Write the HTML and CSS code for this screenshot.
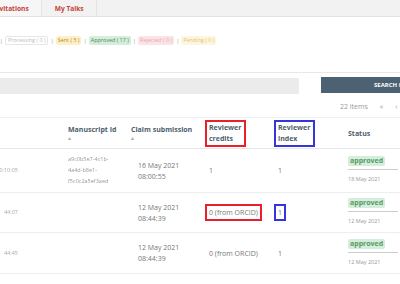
FILE: index.html
```html
<!DOCTYPE html>
<html lang="en">
  <head>
    <meta charset="UTF-8" />
    <meta name="viewport" content="width=device-width, initial-scale=1.0" />
    <title>My Reviews</title>
    <link rel="stylesheet" href="styles.css">
  </head>
  <body>
    <div class="page">
      <!-- Вкладки -->
      <nav class="tabs">
        <a class="tab first" href="#">Invitations</a>
        <a class="tab" href="#">My Talks</a>
        <span class="tab-rest"></span>
      </nav>

      <!-- Фильтры -->
      <div class="filters">
        <span class="pill all">All ( 22 )</span>
        <span class="sep">|</span>
        <span class="pill processing">Processing ( 0 )</span>
        <span class="sep">|</span>
        <span class="pill sent">Sent ( 5 )</span>
        <span class="sep">|</span>
        <span class="pill approved">Approved ( 17 )</span>
        <span class="sep">|</span>
        <span class="pill rejected">Rejected ( 0 )</span>
        <span class="sep">|</span>
        <span class="pill pending">Pending ( 0 )</span>
      </div>

      <div class="search-row">
        <input class="search-input" type="text" />
        <button class="search-btn">SEARCH IN</button>
      </div>

      <div class="pager">
        <span class="count">22 items</span>
        <span class="nav">«</span>
        <span class="nav">‹</span>
      </div>

      <table class="claims">
        <colgroup>
          <col class="c-type" />
          <col class="c-id" />
          <col class="c-date" />
          <col class="c-credits" />
          <col class="c-index" />
          <col class="c-status" />
        </colgroup>
        <thead>
          <tr>
            <th>Type <span class="sort">▴</span></th>
            <th>Manuscript Id<span class="sort-below">▴</span></th>
            <th>Claim submission<span class="sort-below">▴</span></th>
            <th><span class="mark red">Reviewer<br />credits</span></th>
            <th><span class="mark blue">Reviewer<br />index</span></th>
            <th>Status</th>
          </tr>
        </thead>
        <tbody>
          <tr class="r1">
            <td><span class="hidden-text">10:10:05</span></td>
            <td><span class="hidden-text id">a9c0b5e7-4c1b- 4a4d-b8e1- f5c0c2a5ef3aed</span></td>
            <td class="date">16 May 2021<br />08:00:55</td>
            <td class="num">1</td>
            <td class="num">1</td>
            <td>
              <div class="status">
                <span class="badge">approved</span>
                <span class="status-date">18 May 2021</span>
              </div>
            </td>
          </tr>
          <tr class="r2">
            <td><span class="hidden-text">44:07</span></td>
            <td></td>
            <td class="date">12 May 2021<br />08:44:39</td>
            <td><span class="mark red">0 (from ORCID)</span></td>
            <td><span class="mark blue">1</span></td>
            <td>
              <div class="status">
                <span class="badge">approved</span>
                <span class="status-date">12 May 2021</span>
              </div>
            </td>
          </tr>
          <tr class="r3">
            <td><span class="hidden-text">44:45</span></td>
            <td></td>
            <td class="date">12 May 2021<br />08:44:39</td>
            <td class="num">0 (from ORCID)</td>
            <td class="num">1</td>
            <td>
              <div class="status">
                <span class="badge">approved</span>
                <span class="status-date">12 May 2021</span>
              </div>
            </td>
          </tr>
        </tbody>
      </table>
    </div>
  </body>
</html>
```
FILE: styles.css
```css
/* Общие стили */
body {
  margin: 0;
  font-family: "Open Sans", "DejaVu Sans", sans-serif;
  background-color: #fff;
  color: #777;
  width: 400px;
  height: 284px;
  overflow: hidden;
}

.page {
  width: 480px;
}

/* Вкладки */
.tabs {
  display: flex;
  height: 16px;
  background-color: #f2f2f2;
  border-bottom: 1px solid #e2e2e2;
  margin-left: -20px;
}

.tab {
  display: flex;
  align-items: center;
  padding: 0 12px 0 13px;
  font-size: 6.6px;
  font-weight: bold;
  color: #c4423a;
  text-decoration: none;
  border-right: 1px solid #e4e4e4;
}

.tab.first {
  background-color: #f6f6f6;
}

/* Фильтры */
.filters {
  display: flex;
  align-items: center;
  gap: 2px;
  margin-top: 18px;
  margin-left: -26px;
  height: 11px;
  font-size: 5.4px;
}

.sep {
  color: #999;
  font-size: 6px;
}

.pill {
  padding: 1px 2px;
  border-radius: 2px;
  line-height: 7px;
}

.all {
  color: #aaa;
}

.processing {
  color: #bbb;
  border: 1px solid #e6e6e6;
  padding: 0 2px;
}

.sent {
  background-color: #fdefc6;
  color: #b98a2a;
}

.approved {
  background-color: #d5eddb;
  color: #4f8a5b;
}

.rejected {
  background-color: #fbe4e6;
  color: #e9a6ad;
}

.pending {
  background-color: #fdf5de;
  color: #e6c27a;
}

/* Поиск */
.search-row {
  display: flex;
  align-items: flex-start;
  gap: 22px;
  margin-top: 26px;
  padding-top: 4px;
  border-top: 1px solid #e8e8e8;
  width: 440px;
}

.search-input {
  width: 299px;
  height: 16px;
  margin: 1px 0 0;
  padding: 0;
  border: none;
  background-color: #ebebeb;
  box-sizing: border-box;
}

.search-btn {
  width: 119px;
  height: 16px;
  border: none;
  padding: 0 0 0 53px;
  text-align: left;
  background-color: #4c6272;
  color: #fff;
  font-family: "Open Sans", sans-serif;
  font-size: 6px;
  font-weight: bold;
}

/* Пагинация */
.pager {
  display: flex;
  align-items: center;
  gap: 12px;
  padding-left: 340px;
  margin-top: 6px;
  height: 12px;
  font-size: 7px;
  color: #999;
}

/* Таблица */
.claims {
  table-layout: fixed;
  border-collapse: collapse;
  margin-left: -40px;
  margin-top: 5px;
  width: 473px;
  font-size: 7px;
}

.c-type { width: 103px; }
.c-id { width: 63px; }
.c-date { width: 74px; }
.c-credits { width: 69px; }
.c-index { width: 74px; }
.c-status { width: 90px; }

.claims th {
  height: 30px;
  padding: 0 5px;
  text-align: left;
  vertical-align: middle;
  font-weight: bold;
  color: #4d5e6c;
  line-height: 11px;
  border-top: 1px solid #f0f0f0;
  border-bottom: 1px solid #e6e6e6;
}

.sort {
  color: #aaa;
  font-size: 6px;
  margin-left: 3px;
}

.sort-below {
  display: block;
  color: #aaa;
  font-size: 6px;
  line-height: 7px;
}

.claims td {
  padding: 0 5px;
  vertical-align: middle;
  color: #777;
  line-height: 11px;
  border-bottom: 1px solid #eee;
}

.r1 td { height: 43px; }
.r2 td { height: 39px; }
.r3 td { height: 40px; }

.claims td.date {
  padding-left: 12px;
}

.claims td.num {
  padding-left: 9px;
}

/* Разметка красной и синей рамкой */
.mark {
  display: inline-block;
  padding: 1px 2px;
  border: 2px solid;
}

.mark.red {
  border-color: #e8202a;
}

.mark.blue {
  border-color: #3535d8;
}

th .mark {
  padding: 0 3px 1px 2px;
}

.hidden-text {
  display: block;
  color: #aaa;
  font-size: 5.5px;
  filter: blur(0.6px);
  text-align: right;
  padding-right: 40px;
}

.hidden-text.id {
  text-align: left;
  padding-right: 0;
  line-height: 11px;
  color: #999;
  width: 56px;
}

/* Статус */
.status {
  display: flex;
  flex-direction: column;
  align-items: flex-start;
}

.badge {
  background-color: #d5eddb;
  color: #5a9a66;
  font-weight: bold;
  padding: 0 2px;
  line-height: 10px;
  border-radius: 2px;
}

.status-date {
  width: 50px;
  margin-top: 3px;
  padding-top: 4px;
  border-top: 1px solid #ccc;
  font-size: 5.5px;
  color: #999;
}
```
